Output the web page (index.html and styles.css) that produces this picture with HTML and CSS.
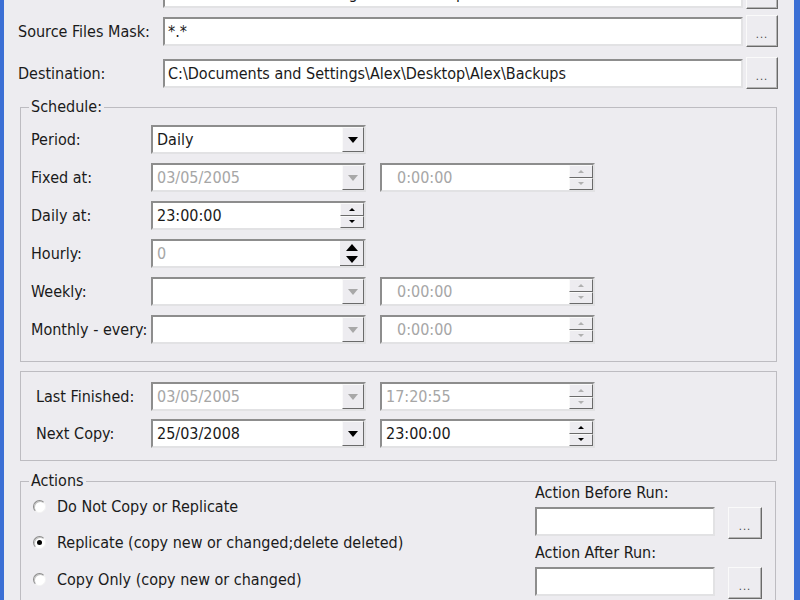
FILE: index.html
```html
<!DOCTYPE html>
<html lang="en">

<head>
    <meta charset="UTF-8">
    <meta name="viewport" content="width=device-width, initial-scale=1.0">
    <title>Backup Task</title>
    <link rel="stylesheet" href="styles.css">
</head>

<body>
    <div class="window">
        <div class="paths">
            <div class="path-row">
                <span class="label">Source:</span>
                <div class="field"><span class="value">C:\Documents and Settings\Alex\Desktop\Alex</span></div>
                <button class="browse">...</button>
            </div>
            <div class="path-row mask">
                <span class="label">Source Files Mask:</span>
                <div class="field"><span class="value">*.*</span></div>
                <button class="browse">...</button>
            </div>
            <div class="path-row dest">
                <span class="label">Destination:</span>
                <div class="field"><span class="value">C:\Documents and Settings\Alex\Desktop\Alex\Backups</span></div>
                <button class="browse">...</button>
            </div>
        </div>

        <fieldset class="group schedule">
            <legend>Schedule:</legend>
            <div class="form">
                <span class="label">Period:</span>
                <div class="combo"><span class="value">Daily</span><span class="drop"><i class="arrow-down"></i></span></div>

                <span class="label">Fixed at:</span>
                <div class="combo disabled"><span class="value">03/05/2005</span><span class="drop"><i class="arrow-down"></i></span></div>
                <div class="time disabled"><span class="value pad">0:00:00</span><span class="spin"><span class="half"><i class="tiny-up"></i></span><span class="half"><i class="tiny-down"></i></span></span></div>

                <span class="label">Daily at:</span>
                <div class="time"><span class="value">23:00:00</span><span class="spin"><span class="half"><i class="tiny-up"></i></span><span class="half"><i class="tiny-down"></i></span></span></div>

                <span class="label">Hourly:</span>
                <div class="time hourly disabled"><span class="value">0</span><span class="spin big"><span class="half"><i class="big-up"></i></span><span class="half"><i class="big-down"></i></span></span></div>

                <span class="label">Weekly:</span>
                <div class="combo disabled"><span class="value"></span><span class="drop"><i class="arrow-down"></i></span></div>
                <div class="time disabled"><span class="value pad">0:00:00</span><span class="spin"><span class="half"><i class="tiny-up"></i></span><span class="half"><i class="tiny-down"></i></span></span></div>

                <span class="label">Monthly - every:</span>
                <div class="combo disabled"><span class="value"></span><span class="drop"><i class="arrow-down"></i></span></div>
                <div class="time disabled"><span class="value pad">0:00:00</span><span class="spin"><span class="half"><i class="tiny-up"></i></span><span class="half"><i class="tiny-down"></i></span></span></div>
            </div>
        </fieldset>

        <fieldset class="group times">
            <div class="form">
                <span class="label">Last Finished:</span>
                <div class="combo disabled"><span class="value">03/05/2005</span><span class="drop"><i class="arrow-down"></i></span></div>
                <div class="time disabled"><span class="value">17:20:55</span><span class="spin"><span class="half"><i class="tiny-up"></i></span><span class="half"><i class="tiny-down"></i></span></span></div>

                <span class="label">Next Copy:</span>
                <div class="combo"><span class="value">25/03/2008</span><span class="drop"><i class="arrow-down"></i></span></div>
                <div class="time"><span class="value">23:00:00</span><span class="spin"><span class="half"><i class="tiny-up"></i></span><span class="half"><i class="tiny-down"></i></span></span></div>
            </div>
        </fieldset>

        <fieldset class="group actions">
            <legend>Actions</legend>
            <div class="actions-body">
                <div class="radios">
                    <label class="option"><span class="radio"></span>Do Not Copy or Replicate</label>
                    <label class="option"><span class="radio checked"></span>Replicate (copy new or changed;delete deleted)</label>
                    <label class="option"><span class="radio"></span>Copy Only (copy new or changed)</label>
                </div>
                <div class="run-actions">
                    <span class="run-label">Action Before Run:</span>
                    <div class="run-row">
                        <div class="field"></div>
                        <button class="browse">...</button>
                    </div>
                    <span class="run-label after">Action After Run:</span>
                    <div class="run-row">
                        <div class="field"></div>
                        <button class="browse">...</button>
                    </div>
                </div>
            </div>
        </fieldset>
    </div>
</body>

</html>
```

FILE: styles.css
```css
:root {
    --face: #edecf0;
    --frame: #3b6fd5;
    --shadow: #8d8d8d;
    --dark: #6a6a6a;
    --light: #e2e2e4;
    --grey-text: #a6a6a6;
    --group-line: #bdbcc1;
}

* {
    box-sizing: border-box;
}

body {
    margin: 0;
    background-color: var(--face);
}

.window {
    width: 800px;
    height: 600px;
    overflow: hidden;
    background-color: var(--face);
    border-left: 4px solid var(--frame);
    border-right: 6px solid var(--frame);
    font-family: "DejaVu Sans Condensed", "DejaVu Sans", sans-serif;
    font-stretch: condensed;
    font-size: 16px;
    color: #1a1a1a;
}

.label {
    white-space: nowrap;
}

/* top path rows */

.paths {
    margin-top: -23px;
    padding-left: 14px;
    display: flex;
    flex-direction: column;
}

.path-row {
    display: grid;
    grid-template-columns: 142px 580px 32px;
    column-gap: 3px;
    align-items: center;
    height: 32px;
}

.path-row.mask {
    margin-top: 6px;
}

.path-row.dest {
    margin-top: 10px;
}

.field,
.combo,
.time {
    height: 29px;
    background-color: #fff;
    border: 2px solid;
    border-color: var(--shadow) var(--light) var(--light) var(--shadow);
    display: flex;
    align-items: center;
    white-space: nowrap;
    overflow: hidden;
}

.field {
    padding-left: 3px;
}

.browse {
    height: 32px;
    margin: 0;
    padding: 0 0 5px 0;
    background-color: var(--face);
    border: 1px solid;
    border-color: #fafafa var(--dark) var(--dark) #fafafa;
    box-shadow: inset -1px -1px 0 #b4b4b4;
    font-family: inherit;
    font-size: 11px;
    letter-spacing: 1px;
    color: #444;
    display: flex;
    align-items: flex-end;
    justify-content: center;
}

/* group boxes */

.group {
    margin: 0 17px 0 16px;
    padding: 0;
    border: 1px solid var(--group-line);
}

.group legend {
    margin-left: 8px;
    padding: 0 2px;
    line-height: 18px;
}

.schedule {
    margin-top: 9px;
}

.times {
    margin-top: 9px;
}

.actions {
    margin: 11px 18px 0 16px;
    height: 200px;
}

.form {
    display: grid;
    column-gap: 14px;
    grid-auto-rows: 29px;
    align-items: center;
}

.form .label {
    grid-column: 1;
}

.schedule .form {
    padding: 9px 10px 17px;
    grid-template-columns: 106px 215px 215px;
    row-gap: 9px;
}

.times .form {
    padding: 10px 15px 12px;
    grid-template-columns: 101px 215px 215px;
    row-gap: 8px;
}

.combo,
.time {
    padding-left: 4px;
    justify-content: space-between;
}

.value {
    flex: 1;
}

.value.pad {
    padding-left: 11px;
}

.disabled .value {
    color: var(--grey-text);
}

.drop {
    width: 22px;
    height: 100%;
    background-color: var(--face);
    border: 1px solid;
    border-color: #fafafa var(--dark) var(--dark) #fafafa;
    display: flex;
    align-items: center;
    justify-content: center;
}

.arrow-down {
    width: 0;
    height: 0;
    border-left: 5px solid transparent;
    border-right: 5px solid transparent;
    border-top: 6px solid #000;
}

.disabled .arrow-down {
    border-top-color: #a8a8a8;
}

.spin {
    width: 24px;
    height: 100%;
    display: flex;
    flex-direction: column;
}

.spin .half {
    flex: 1;
    background-color: var(--face);
    border: 1px solid;
    border-color: #fafafa var(--dark) var(--dark) #fafafa;
    display: flex;
    align-items: center;
    justify-content: center;
}

.tiny-up,
.tiny-down,
.big-up,
.big-down {
    width: 0;
    height: 0;
    border-left: 3px solid transparent;
    border-right: 3px solid transparent;
}

.tiny-up {
    border-bottom: 3px solid #000;
}

.tiny-down {
    border-top: 3px solid #000;
}

.disabled .tiny-up {
    border-bottom-color: #b0b0b0;
}

.disabled .tiny-down {
    border-top-color: #b0b0b0;
}

.spin.big .half {
    border: 0;
    background-color: transparent;
}

.spin.big {
    background-color: var(--face);
    border-right: 1px solid var(--dark);
    border-bottom: 1px solid var(--dark);
}

.big-up {
    border-left-width: 6px;
    border-right-width: 6px;
    border-bottom: 7px solid #000;
}

.big-down {
    border-left-width: 6px;
    border-right-width: 6px;
    border-top: 7px solid #000;
}

/* actions */

.actions-body {
    display: grid;
    grid-template-columns: 1fr 227px;
    padding: 0 13px 0 12px;
}

.radios {
    display: flex;
    flex-direction: column;
    gap: 4.5px;
}

.option {
    height: 32px;
    display: flex;
    align-items: center;
    gap: 11px;
}

.radio {
    width: 13px;
    height: 13px;
    border-radius: 50%;
    background-color: #fff;
    border: 1px solid;
    border-color: #8a8a8a #f4f4f4 #f4f4f4 #8a8a8a;
    box-shadow: inset 1px 1px 0 #c4c4c4;
    display: flex;
    align-items: center;
    justify-content: center;
}

.radio.checked::after {
    content: '';
    width: 5px;
    height: 5px;
    border-radius: 50%;
    background-color: #000;
}

.run-actions {
    margin-top: -6px;
    display: flex;
    flex-direction: column;
}

.run-label {
    line-height: 18px;
}

.run-label.after {
    margin-top: 5px;
}

.run-row {
    margin-top: 5px;
    display: flex;
    align-items: flex-start;
    gap: 13px;
}

.run-row .field {
    width: 180px;
}

.run-row .browse {
    width: 34px;
}
```
